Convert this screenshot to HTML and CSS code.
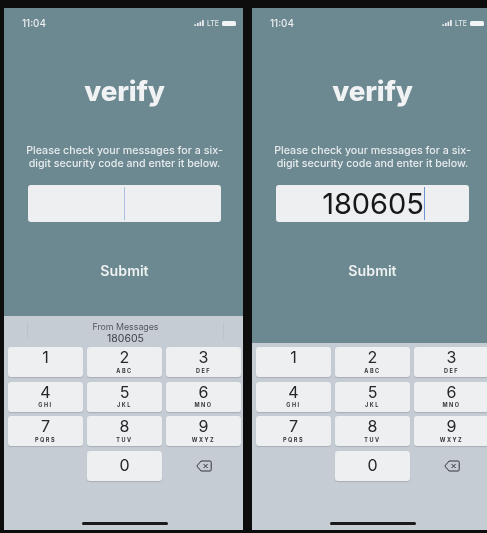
FILE: index.html
```html
<!DOCTYPE html>
<html lang="en">
<head>
<meta charset="utf-8">
<title>verify</title>
<link rel="stylesheet" href="styles.css">
</head>
<body>
<main class="stage">
  <section class="phone">
    <div class="status">
      <span class="time">11:04</span>
      <span class="indicators">
        <svg class="signal" viewBox="0 0 12 7"><rect x="0" y="5" width="2" height="2"/><rect x="3" y="3.5" width="2" height="3.5"/><rect x="6" y="2" width="2" height="5"/><rect x="9" y="0" width="2" height="7"/></svg>
        <span class="lte">LTE</span>
        <span class="battery"></span>
      </span>
    </div>
    <h1 class="title">verify</h1>
    <p class="message">Please check your messages for a six-digit security code and enter it below.</p>
    <div class="field"><span class="caret"></span></div>
    <div class="submit">Submit</div>
    <div class="keyboard keyboard-suggest">
      <div class="suggestion"><span class="from">From Messages</span><span class="code">180605</span></div>
      <div class="keys">
        <div class="key"><b class="digit">1</b></div>
        <div class="key"><b class="digit">2</b><i class="letters">ABC</i></div>
        <div class="key"><b class="digit">3</b><i class="letters">DEF</i></div>
        <div class="key"><b class="digit">4</b><i class="letters">GHI</i></div>
        <div class="key"><b class="digit">5</b><i class="letters">JKL</i></div>
        <div class="key"><b class="digit">6</b><i class="letters">MNO</i></div>
        <div class="key"><b class="digit">7</b><i class="letters">PQRS</i></div>
        <div class="key"><b class="digit">8</b><i class="letters">TUV</i></div>
        <div class="key"><b class="digit">9</b><i class="letters">WXYZ</i></div>
        <div class="key key-blank"></div>
        <div class="key key-zero"><b class="digit">0</b></div>
        <div class="key key-blank key-del"><svg class="del" viewBox="0 0 16 12"><path d="M5 1h9a1.2 1.2 0 0 1 1.2 1.2v7.6A1.2 1.2 0 0 1 14 11H5L.8 6z"/><path d="M7.6 4l4 4M11.6 4l-4 4"/></svg></div>
      </div>
      <div class="home"></div>
    </div>
  </section>
  <section class="phone">
    <div class="status">
      <span class="time">11:04</span>
      <span class="indicators">
        <svg class="signal" viewBox="0 0 12 7"><rect x="0" y="5" width="2" height="2"/><rect x="3" y="3.5" width="2" height="3.5"/><rect x="6" y="2" width="2" height="5"/><rect x="9" y="0" width="2" height="7"/></svg>
        <span class="lte">LTE</span>
        <span class="battery"></span>
      </span>
    </div>
    <h1 class="title">verify</h1>
    <p class="message">Please check your messages for a six-digit security code and enter it below.</p>
    <div class="field"><span class="value">180605</span><span class="caret caret-filled"></span></div>
    <div class="submit">Submit</div>
    <div class="keyboard">
      <div class="keys">
        <div class="key"><b class="digit">1</b></div>
        <div class="key"><b class="digit">2</b><i class="letters">ABC</i></div>
        <div class="key"><b class="digit">3</b><i class="letters">DEF</i></div>
        <div class="key"><b class="digit">4</b><i class="letters">GHI</i></div>
        <div class="key"><b class="digit">5</b><i class="letters">JKL</i></div>
        <div class="key"><b class="digit">6</b><i class="letters">MNO</i></div>
        <div class="key"><b class="digit">7</b><i class="letters">PQRS</i></div>
        <div class="key"><b class="digit">8</b><i class="letters">TUV</i></div>
        <div class="key"><b class="digit">9</b><i class="letters">WXYZ</i></div>
        <div class="key key-blank"></div>
        <div class="key key-zero"><b class="digit">0</b></div>
        <div class="key key-blank key-del"><svg class="del" viewBox="0 0 16 12"><path d="M5 1h9a1.2 1.2 0 0 1 1.2 1.2v7.6A1.2 1.2 0 0 1 14 11H5L.8 6z"/><path d="M7.6 4l4 4M11.6 4l-4 4"/></svg></div>
      </div>
      <div class="home"></div>
    </div>
  </section>
</main>
</body>
</html>
```
FILE: styles.css
```css
* { box-sizing: border-box; }
html, body { margin: 0; height: 100%; }
body {
  width: 487px;
  height: 533px;
  overflow: hidden;
  background: #0d0d0e;
  font-family: "Inter", "Liberation Sans", sans-serif;
}
.stage {
  display: flex;
  gap: 9px;
  width: 487px;
  height: 533px;
  padding: 8px 0 3px 4px;
  overflow: hidden;
}
.phone {
  flex: 0 0 239px;
  display: flex;
  flex-direction: column;
  align-items: center;
  background: #6c8890;
  overflow: hidden;
  filter: blur(.35px);
}
.status {
  width: 100%;
  display: flex;
  justify-content: space-between;
  align-items: center;
  padding: 5px 3px 0 18px;
  height: 25px;
}
.time { font-size: 9.8px; font-weight: 500; color: #edf0f1; }
.indicators { display: flex; align-items: center; gap: 2px; }
.signal { width: 11px; height: 6px; fill: #edf0f1; }
.lte { font-size: 7px; font-weight: 500; color: #e3e8ea; }
.battery { width: 14px; height: 5px; margin: 0 4px 0 1px; border-radius: 1.5px; background: #f2f3f4; }
.title {
  margin: 40px 0 0 2px;
  font-size: 27.8px;
  line-height: 36px;
  font-weight: 800;
  letter-spacing: -.2px;
  color: #f1f2f3;
}
.message {
  width: 205px;
  margin: 35px 0 0 2px;
  font-size: 10.7px;
  line-height: 13px;
  font-weight: 500;
  text-align: center;
  color: #e8ecee;
}
.field {
  width: 193px;
  height: 37px;
  margin: 15px 0 0 2px;
  display: flex;
  align-items: center;
  justify-content: center;
  border-radius: 3px;
  background: #eeeff1;
}
.value { margin-left: 2px; font-size: 29px; font-weight: 400; color: #17181a; letter-spacing: -.1px; }
.caret { width: 1px; height: 33px; background: #a9bfdf; }
.caret-filled { background: #6d93d0; }
.submit {
  margin: 40px 0 0 2px;
  font-size: 14.2px;
  line-height: 18px;
  font-weight: 600;
  color: #eef1f2;
}
.keyboard {
  margin-top: auto;
  width: 100%;
  height: 187px;
  padding: 4px 0 0 4px;
  display: flex;
  flex-direction: column;
  background: #c6ccd3;
}
.keyboard-suggest { height: 214px; padding-top: 0; }
.suggestion {
  position: relative;
  height: 31px;
  display: flex;
  flex-direction: column;
  align-items: center;
  padding-top: 5px;
  line-height: 11px;
}
.suggestion::before,
.suggestion::after {
  content: "";
  position: absolute;
  top: 7px;
  width: 1px;
  height: 16px;
  background: #bcc2c9;
}
.suggestion::before { left: 19px; }
.suggestion::after { right: 19px; }
.from { font-size: 8.8px; color: #53575c; }
.code { font-size: 10.5px; color: #3e4145; line-height: 12px; margin-top: 1px; }
.keys {
  display: grid;
  grid-template-columns: repeat(3, 75px);
  grid-auto-rows: 30px;
  column-gap: 4px;
  row-gap: 4.6px;
}
.key {
  display: flex;
  flex-direction: column;
  align-items: center;
  justify-content: flex-start;
  border-radius: 3px;
  background: #eeeff1;
  box-shadow: 0 1px 1px #a9afb6;
  color: #26272a;
}
.key-blank { background: transparent; box-shadow: none; justify-content: center; }
.key-zero { justify-content: center; }
.digit { font-size: 16px; line-height: 17px; font-weight: 400; margin-top: 2px; }
.key-zero .digit { margin-top: 0; }
.letters {
  margin-top: 1.5px;
  font-size: 5.5px;
  line-height: 7px;
  font-style: normal;
  font-weight: 700;
  letter-spacing: 1.5px;
  color: #33353a;
}
.del { width: 16px; height: 12px; fill: none; stroke: #34363b; stroke-width: 1; }
.home {
  width: 86px;
  height: 3px;
  margin-top: auto;
  margin-bottom: 5px;
  margin-left: 74px;
  border-radius: 2px;
  background: #1a1a1c;
}
```
